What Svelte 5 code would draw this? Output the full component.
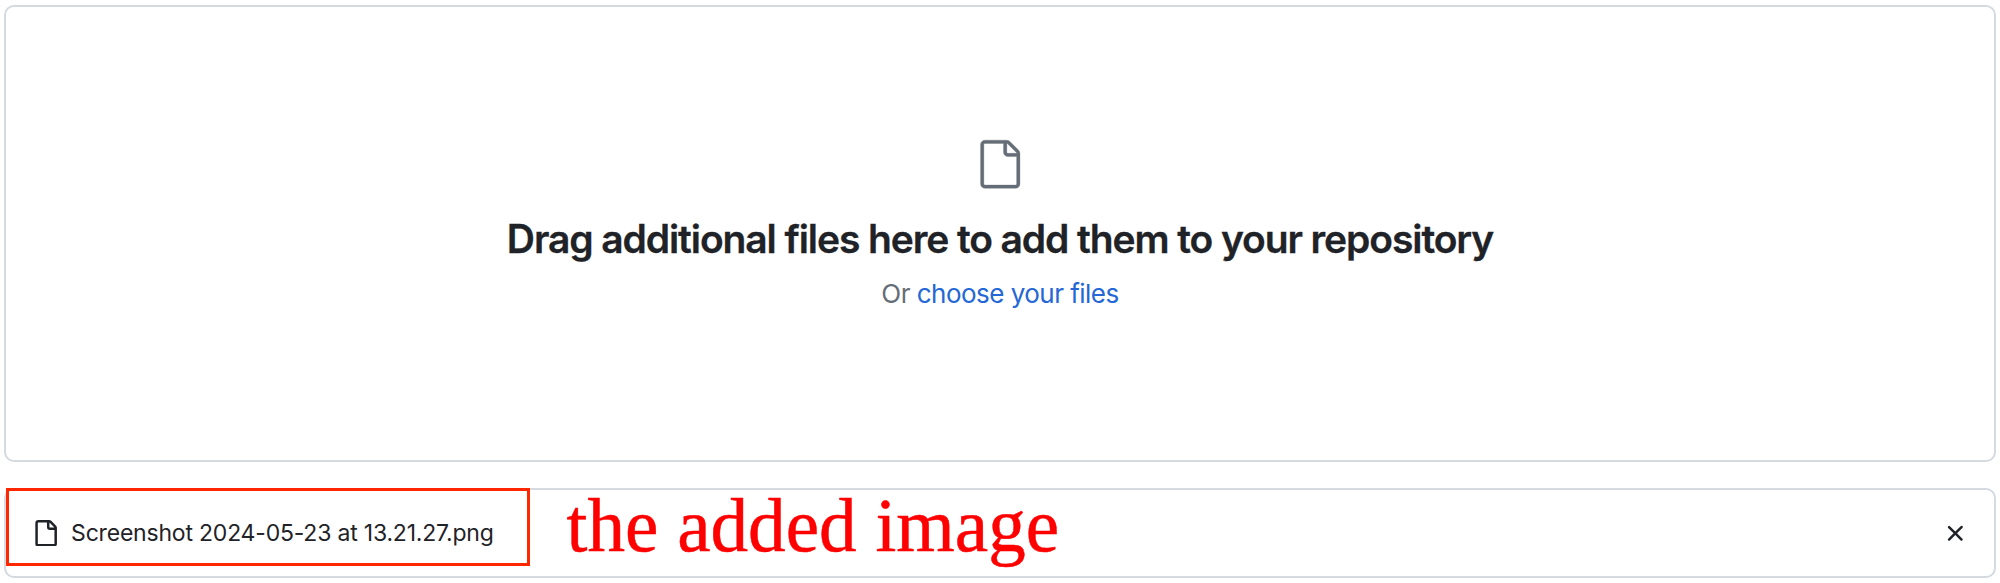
<script>
  const filename = 'Screenshot 2024-05-23 at 13.21.27.png';
</script>

<main>
  <section class="dropzone">
    <svg class="file-large" viewBox="0 0 24 24" aria-hidden="true">
      <path d="M3 3a2 2 0 0 1 2-2h9.982a2 2 0 0 1 1.414.586l4.018 4.018A2 2 0 0 1 21 7.018V21a2 2 0 0 1-2 2H5a2 2 0 0 1-2-2Zm2-.5a.5.5 0 0 0-.5.5v18a.5.5 0 0 0 .5.5h14a.5.5 0 0 0 .5-.5V8.5h-4a2 2 0 0 1-2-2v-4Zm10 0v4a.5.5 0 0 0 .5.5h4a.5.5 0 0 0-.146-.336l-4.018-4.018A.5.5 0 0 0 15 2.5Z" />
    </svg>
    <h1>Drag additional files here to add them to your repository</h1>
    <p>Or <a href="#choose">choose your files</a></p>
  </section>

  <section class="files">
    <div class="entry">
      <svg class="icon" viewBox="0 0 16 16" aria-hidden="true">
        <path d="M2 1.75C2 .784 2.784 0 3.75 0h6.586c.464 0 .909.184 1.237.513l2.914 2.914c.329.328.513.773.513 1.237v9.586A1.75 1.75 0 0 1 13.25 16h-9.5A1.75 1.75 0 0 1 2 14.25Zm1.75-.25a.25.25 0 0 0-.25.25v12.5c0 .138.112.25.25.25h9.5a.25.25 0 0 0 .25-.25V6h-2.75A1.75 1.75 0 0 1 9 4.25V1.5Zm6.75.062V4.25c0 .138.112.25.25.25h2.688l-.011-.013-2.914-2.914-.013-.011Z" />
      </svg>
      <span class="name">{filename}</span>
    </div>
    <span class="note">the added image</span>
    <button aria-label="Remove file">
      <svg class="icon" viewBox="0 0 16 16" aria-hidden="true">
        <path d="M3.72 3.72a.75.75 0 0 1 1.06 0L8 6.94l3.22-3.22a.749.749 0 0 1 1.275.326.749.749 0 0 1-.215.734L9.06 8l3.22 3.22a.749.749 0 0 1-.326 1.275.749.749 0 0 1-.734-.215L8 9.06l-3.22 3.22a.751.751 0 0 1-1.042-.018.751.751 0 0 1-.018-1.042L6.94 8 3.72 4.78a.75.75 0 0 1 0-1.06Z" />
      </svg>
    </button>
  </section>
</main>

<style>
  :global(body) {
    margin: 0;
    background: #fff;
  }
  main {
    box-sizing: border-box;
    height: 583px;
    padding: 5px 4px 5px;
    display: flex;
    flex-direction: column;
    gap: 26px;
    font-family: Inter, 'Liberation Sans', sans-serif;
    color: #1f2328;
  }
  section {
    box-sizing: border-box;
    border: 2px solid #d4dae0;
    border-radius: 10px;
  }
  .dropzone {
    height: 457px;
    display: flex;
    flex-direction: column;
    align-items: center;
    padding-top: 131px;
  }
  .file-large {
    display: block;
    flex: none;
    width: 52.5px;
    height: 52.5px;
    fill: #656d76;
    stroke: #656d76;
    stroke-width: 0.15px;
  }
  h1 {
    margin: 23px 0 0;
    font-size: 39px;
    line-height: 50px;
    font-weight: 600;
    letter-spacing: -1.1px;
    white-space: nowrap;
    -webkit-text-stroke: 0.3px currentColor;
  }
  p {
    margin: 11px 0 0;
    font-size: 26px;
    line-height: 38px;
    letter-spacing: -0.53px;
    color: #656d76;
    white-space: nowrap;
  }
  a {
    color: #2467d6;
    text-decoration: none;
  }
  .files {
    height: 90px;
    display: flex;
    align-items: flex-start;
  }
  .entry {
    box-sizing: border-box;
    flex: none;
    width: 524px;
    height: 78px;
    margin: -2px 0 0 -0.5px;
    padding: 12px 0 0 23px;
    border: 3px solid #ff2600;
    display: flex;
    align-items: center;
  }
  .icon {
    display: block;
    flex: none;
    width: 26.6px;
    height: 26.6px;
    fill: currentColor;
  }
  .name {
    margin-left: 13px;
    font-size: 23px;
    line-height: 32px;
    letter-spacing: -0.2px;
    white-space: nowrap;
  }
  .note {
    margin-left: 37px;
    font: 75.2px/86px 'Liberation Serif', serif;
    margin-top: -7px;
    color: #f00;
    white-space: nowrap;
    -webkit-text-stroke: 0.5px currentColor;
  }
  button {
    margin: 29.5px 25.5px 0 auto;
    padding: 0;
    border: 0;
    background: none;
    color: #1f2328;
  }
</style>
